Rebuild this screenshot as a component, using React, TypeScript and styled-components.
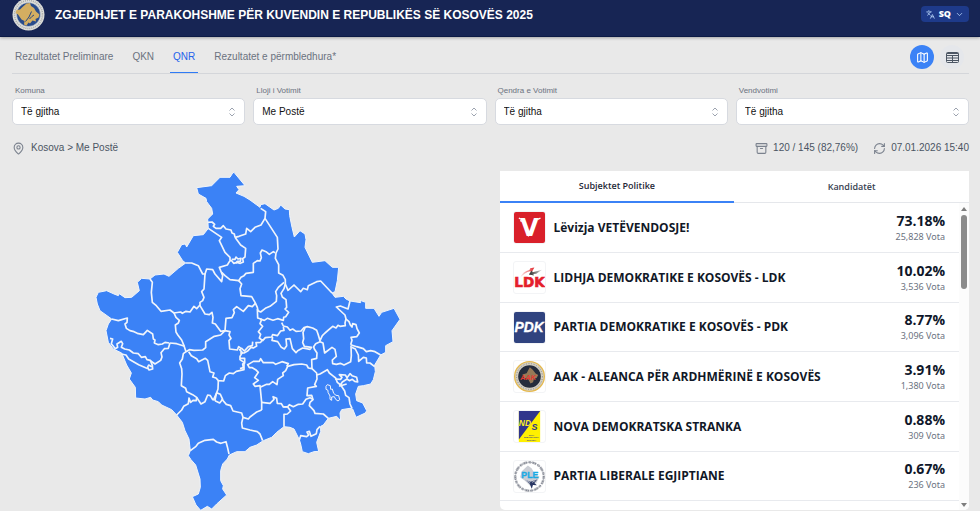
import React from "react";
import styled, { createGlobalStyle } from "styled-components";
import { Archive, ChevronDown, Languages, Map as MapIcon, MapPin, RefreshCw } from "lucide-react";

const GlobalStyle = createGlobalStyle`
  *, *::before, *::after { box-sizing: border-box; }
  html, body { margin: 0; }
  body {
    background: #e9e9e9;
    color: #4b5563;
    font-family: "Liberation Sans", Arial, sans-serif;
    font-size: 10px;
    line-height: 14px;
    overflow: hidden;
  }
  button, select { font: inherit; }
  button { cursor: pointer; }
`;

const Page = styled.div`
  display: flex;
  flex-direction: column;
  height: 100vh;
`;

const Header = styled.header`
  display: flex;
  align-items: flex-end;
  flex: none;
  gap: 10px;
  height: 37px;
  padding: 0 11px 5px 12px;
  overflow: hidden;
  background: #172554;
  border-bottom: 1px solid #0c1a45;
  box-shadow: 0 1px 3px rgba(0, 0, 0, 0.3);
`;

const Title = styled.h1`
  flex: 1;
  margin: 0;
  padding-bottom: 6px;
  color: #fff;
  font-size: 12px;
  font-weight: 700;
  line-height: 20px;
  white-space: nowrap;
`;

const LanguageButton = styled.button`
  display: flex;
  align-items: center;
  gap: 4px;
  height: 16px;
  margin-bottom: 9px;
  padding: 0 5px;
  border: 0;
  border-radius: 4px;
  background: #1e3a8a;
  color: #bfdbfe;
  font-family: "Open Sans", sans-serif;
  font-size: 9px;
  font-weight: 700;
  strong { color: #fff; }
`;

const Content = styled.main`
  display: flex;
  flex: 1;
  flex-direction: column;
  min-height: 0;
  padding: 4px 11px 0 12px;
`;

const Navigation = styled.div`
  display: flex;
  align-items: center;
  justify-content: space-between;
  height: 33px;
  border-bottom: 1px solid #d4d6da;
`;

const Tabs = styled.nav`
  display: flex;
  gap: 13px;
  height: 32px;
`;

const Tab = styled.a<{ $active?: boolean }>`
  display: flex;
  align-items: center;
  padding: 1px 3px 0;
  border-bottom: 1px solid ${(p) => (p.$active ? "#2f7bf5" : "transparent")};
  color: ${(p) => (p.$active ? "#2563eb" : "#6b7280")};
  font-size: 10px;
  text-decoration: none;
`;

const ViewButtons = styled.div`
  display: flex;
  gap: 6px;
  padding-right: 5px;
`;

const ViewButton = styled.button<{ $active?: boolean }>`
  display: grid;
  place-items: center;
  width: 24px;
  height: 24px;
  padding: 0;
  border: 0;
  border-radius: 50%;
  background: ${(p) => (p.$active ? "#3b82f6" : "#e5e7eb")};
  color: ${(p) => (p.$active ? "#fff" : "#4b5563")};
`;

const Filters = styled.div`
  display: grid;
  grid-template-columns: repeat(4, 1fr);
  gap: 8px;
  margin-top: 10px;
`;

const Field = styled.label`
  display: block;
  color: #6b7280;
  font-size: 8px;
  line-height: 14px;
`;

const FieldName = styled.span`
  display: block;
  padding-left: 3px;
`;

const SelectFrame = styled.span`
  display: grid;
  grid-template-columns: 1fr 16px;
  align-items: center;
  height: 27px;
  border: 1px solid #d7dae0;
  border-radius: 5px;
  background: #fff;
  color: #9ca3af;
`;

const Select = styled.select`
  grid-area: 1 / 1 / 2 / 3;
  width: 100%;
  height: 100%;
  padding: 0 8px;
  border: 0;
  background: transparent;
  appearance: none;
  color: #111;
  font-size: 10px;
`;

const SelectArrow = styled.svg`
  grid-area: 1 / 2;
  pointer-events: none;
`;

const StatusRow = styled.div`
  display: flex;
  align-items: center;
  gap: 15px;
  margin-top: 16px;
  height: 14px;
`;

const Status = styled.span<{ $grow?: boolean }>`
  display: flex;
  align-items: center;
  flex: ${(p) => (p.$grow ? "1" : "none")};
  gap: ${(p) => (p.$grow ? "6px" : "5px")};
  svg { color: #7b828e; }
`;

const Results = styled.div`
  display: grid;
  grid-template-columns: minmax(0, 1fr) minmax(0, 1fr);
  gap: 18px;
  flex: 1;
  min-height: 0;
  margin-top: 16px;
`;

const MapFrame = styled.div`
  display: flex;
  justify-content: center;
  min-height: 0;
  padding-left: 1px;
  svg { display: block; height: 100%; max-width: 100%; }
`;

const Panel = styled.section`
  display: flex;
  flex-direction: column;
  min-height: 0;
  margin-bottom: 1px;
  overflow: hidden;
  border-radius: 0 0 5px 5px;
  background: #fff;
  font-family: "Noto Sans", sans-serif;
`;

const PanelTabs = styled.div`
  display: grid;
  grid-template-columns: 1fr 1fr;
  flex: none;
  height: 32px;
`;

const PanelTab = styled.button<{ $active?: boolean }>`
  border: 0;
  border-bottom: ${(p) => (p.$active ? "2px solid #3b82f6" : "1px solid #e5e7eb")};
  background: #fff;
  color: ${(p) => (p.$active ? "#1f2937" : "#374151")};
  font-family: "Open Sans", sans-serif;
  font-size: 9px;
  font-weight: 600;
`;

const PanelBody = styled.div`
  display: grid;
  grid-template-columns: 1fr 10px;
  flex: 1;
  min-height: 0;
  overflow: hidden;
`;

const PartyList = styled.ul`
  min-height: 0;
  margin: 0;
  padding: 0;
  overflow: hidden;
  list-style: none;
`;

const PartyRow = styled.li`
  display: flex;
  align-items: center;
  gap: 8px;
  height: 50px;
  padding: 0 14px 0 13px;
  border-bottom: 1px solid #e8eaee;
  &:nth-child(3n) { height: 49px; }
`;

const LogoFrame = styled.span`
  display: grid;
  place-items: center;
  flex: none;
  width: 33px;
  height: 33px;
  overflow: hidden;
  border: 1px solid #f3f4f6;
  border-radius: 3px;
`;

const PartyName = styled.span`
  flex: 1;
  color: #111827;
  font-family: "Open Sans", sans-serif;
  font-size: 12px;
  font-weight: 700;
  line-height: 18px;
  white-space: nowrap;
`;

const Score = styled.span`
  display: flex;
  flex-direction: column;
  align-items: flex-end;
  color: #6b7280;
  font-size: 9px;
  line-height: 14px;
  strong {
    color: #0f172a;
    font-family: "Open Sans", sans-serif;
    font-size: 14px;
    font-weight: 700;
    line-height: 18px;
  }
`;

const Scrollbar = styled.div`
  display: flex;
  flex-direction: column;
  align-items: center;
  justify-content: space-between;
  padding: 4px 0 3px;
  background: #fcfcfc;
`;

const ScrollArrow = styled.i<{ $down?: boolean }>`
  width: 0;
  height: 0;
  border: 3px solid transparent;
  border-top: ${(p) => (p.$down ? "4px solid #7d7d7d" : "0")};
  border-bottom: ${(p) => (p.$down ? "0" : "4px solid #7d7d7d")};
`;

const ScrollThumb = styled.i`
  width: 6px;
  height: 74px;
  margin: 4px 0 auto;
  border-radius: 3px;
  background: #8b8b8b;
`;

const kosovoOutline =
  "432,20 465,60 440,62 447,72 438,82 462,92 480,103 510,125 512,117 525,114 552,133 565,128 572,118 585,130 598,132 599,150 606,185 613,214 630,195 645,205 648,222 645,245 667,290 705,285 727,305 746,305 742,345 735,378 726,382 735,395 760,392 768,400 780,406 812,411 810,404 827,410 827,428 852,428 867,452 875,440 912,428 930,461 906,495 909,528 887,540 887,560 872,568 854,598 856,618 850,642 842,655 820,660 805,662 797,685 800,705 818,712 830,735 826,742 798,755 788,730 780,728 755,732 750,742 752,765 740,752 715,758 700,778 692,782 692,798 680,830 686,857 672,858 655,864 637,858 632,835 628,822 612,790 600,785 582,783 560,800 545,815 520,825 500,838 480,845 465,858 440,858 418,868 412,880 398,895 392,915 392,945 400,960 398,970 410,988 380,1015 365,1030 352,1022 332,1034 318,1018 307,993 325,985 331,965 330,940 317,898 303,882 295,870 301,855 297,820 285,795 277,770 260,748 245,732 215,718 205,708 188,703 182,695 165,700 137,697 136,665 118,640 124,622 110,598 95,562 70,550 55,530 48,495 55,475 65,460 30,435 22,415 18,395 25,380 50,375 72,385 85,390 88,384 105,396 125,395 148,375 142,350 155,338 180,340 195,328 222,325 237,332 265,308 287,292 278,285 262,260 275,237 286,235 290,244 310,210 340,207 355,188 353,160 368,145 365,128 350,108 348,98 325,85 320,66 365,60 390,35 420,35 428,22";

const municipalityBorders = [
  "355,188 395,215 388,225 405,260 420,275 420,285",
  "353,170 366,169 374,176 370,182 378,188 392,188 400,180 408,190 423,193 426,202 433,205 435,215",
  "435,215 447,212 467,205 470,188 482,198 495,185 513,178 525,158 527,138 512,128",
  "525,158 562,215 564,250 558,262 556,278 566,297 566,322 579,329 586,342 586,355 594,374 612,358 632,378 640,368 652,372 655,360 680,348 692,346 726,382",
  "435,215 452,238 467,248 465,274 458,279 460,289 451,293 441,290 431,293 425,285 420,285",
  "425,281 435,281 438,274 444,280 453,278 451,287 442,287 438,293",
  "287,292 305,292 325,300 338,325 345,325 350,310 368,312 375,325 395,348 398,330 388,305 412,298 420,285",
  "395,320 405,330 420,342 446,345 453,335 462,330 468,323 490,320 490,293 502,285 510,286 514,276 511,262 516,253 528,258 538,266 550,258 555,261",
  "446,345 455,355 450,369 453,390 485,393 495,410 502,425 504,435 512,439 526,428 540,422 559,407 560,390 557,378 565,365 582,350",
  "345,325 342,370 335,378 342,395 338,405 330,410 330,420 345,445 358,447 366,440 369,455 367,472 376,475 392,497 405,495 408,458 426,456 433,441 430,432 440,423 460,437 475,420 487,423 497,412",
  "180,340 187,350 184,380 187,410 199,420 213,437 240,433 252,442 272,439 277,443 288,437 300,439 312,422 320,429 330,418",
  "65,460 85,465 112,457 111,470 105,475 109,488 120,495 132,498 142,503 160,507 172,494 188,505 190,520 195,523 193,532 205,537 217,535 225,530 238,532",
  "252,442 258,455 268,464 265,472 256,478 258,499 264,509 275,523 282,540 288,558",
  "240,532 260,534 284,542",
  "60,518 68,520 64,534 76,549 83,545 81,535 94,527 98,534 94,545 104,550 118,553 130,562 145,564 154,575 166,573 171,582 181,584 187,599 188,610 177,613 173,604 176,598 185,603",
  "94,565 108,568 116,580 146,597 174,609",
  "180,584 195,595 212,584 216,574 213,561 223,549 235,548 240,532",
  "288,558 280,564 277,580 269,592 275,609 276,625 274,660 287,668 290,678 308,687 320,695 319,705 309,704 302,710 297,697 295,714 281,722 275,733 260,748",
  "288,558 298,552 312,554 338,553 347,546 347,528 373,512 392,508 405,495",
  "296,558 304,570 320,579 326,588 346,578 353,584 360,618 372,622 368,634 378,637 385,645 401,646 406,630 418,622 430,624 439,617 462,612 462,590 450,582 450,572 457,561 449,552 455,548 463,556 475,543 487,540 488,528",
  "320,695 333,715 345,708 353,688 361,690 368,702 375,703 380,681 391,686 398,701 389,712 375,705",
  "385,645 384,670 379,684 370,703",
  "395,700 409,716 422,720 429,736 455,742 459,755 475,760 480,754 500,739 515,733",
  "459,755 455,772 457,787 480,793 502,798 510,805 518,825",
  "301,855 318,842 325,833 345,824 370,821 380,829 393,833 408,828 412,843 417,865",
  "515,733 515,710 510,660 495,662 490,655 505,644 494,636 505,620 497,612 487,606 478,606 472,595",
  "515,710 540,713 552,701 549,693 560,698 562,713 574,714 580,724 593,724 602,736 592,745 582,746 582,783",
  "580,724 593,723 598,717 610,723 625,716 638,715 648,701 660,696 669,702 660,710 658,720 672,735 675,743 700,745 715,758",
  "669,702 665,689 651,690 653,667 679,662 674,657 681,640 680,622 666,609 655,607 650,598 635,595 612,597 593,602 587,615 578,622 580,630 563,641 561,657 548,648 538,656 530,656 512,664",
  "628,822 632,810 650,813 656,808 651,799 658,797 663,812 679,804 681,792 690,782",
  "474,597 490,587 508,587 512,579 520,591 550,591 557,596 576,588 595,594 590,602",
  "680,628 690,625 712,612 718,622 728,630 737,637 742,650 752,658 764,676 767,689 777,696 780,715 786,728",
  "666,609 665,582 680,578 681,562 673,550 671,543 677,534 690,528 699,532 704,562 726,545 735,551 739,572 727,583 728,594 739,596 751,593 762,598 782,588 784,570 783,540",
  "735,640 752,641 756,635 748,627 766,628 771,636 780,624 786,630 800,635 803,649 794,647 787,641 778,645 771,640 757,649 749,661 770,655",
  "785,545 796,550 805,568 806,587 820,575 829,577 830,592 840,592 854,603",
  "782,537 800,543 820,549 829,558 842,555 855,558 872,568",
  "780,406 774,430 751,421 739,424 765,448 768,460 765,472 766,480 750,482 744,479 738,487 728,482 705,502 697,510 690,525 684,505 680,494 668,487 652,483 642,486 633,496 618,497 608,490 600,494 592,484 580,481 575,471",
  "768,460 777,468 781,478 786,484 788,474 798,477 801,489 808,502 800,513 783,515 786,524 782,537",
  "586,355 582,369 573,383 577,394 588,402 590,425 585,430 596,440 587,453 581,455 580,464 563,459 549,464 532,458 523,464 510,460",
  "502,430 503,457 515,461 510,474 518,482 505,498 512,506 508,517 518,525 526,516 545,514 548,507 562,510 572,496 582,494 580,484",
  "405,495 420,498 417,508 423,518 417,525 419,550 442,553 446,543 453,548",
  "548,514 546,524 563,528 574,545 583,550 590,540 588,520 600,519 607,549 618,561 623,555 638,547 660,551 665,545 643,542 638,530 641,519 639,500 645,487",
  "450,562 462,562 474,555 483,545 490,547 500,541 498,531 512,530 517,522",
  "450,578 464,578 464,592 458,595 460,606 450,609",
];

function KosovoMap() {
  return (
    <svg viewBox="0 16 945 1020" role="img" aria-label="Kosova">
      <polygon points={kosovoOutline} fill="#3b82f6" stroke="#f0f5fc" strokeWidth="3" strokeLinejoin="round" />
      <g fill="none" stroke="#f1f5fb" strokeWidth="5" strokeLinejoin="round">
        {municipalityBorders.map((points) => <polyline key={points} points={points} />)}
        <polygon strokeWidth="3" points="708,662 712,657 721,660 722,671 727,670 731,683 738,689 746,690 749,702 744,706 737,701 733,693 725,694 725,704 720,701 720,691 714,680 714,674 708,671" />
      </g>
    </svg>
  );
}

function Emblem() {
  return (
    <svg width="33" height="33" viewBox="0 0 66 66" role="img" aria-label="KQZ">
      <circle cx="33" cy="33" r="32" fill="#dddeda" />
      <circle cx="33" cy="33" r="28" fill="none" stroke="#a9aaaa" strokeWidth="3" strokeDasharray="2 2" />
      <circle cx="33" cy="33" r="24" fill="#284b8b" stroke="#f0eee5" strokeWidth="1" />
      <path d="M29 11l7-1 2 6 6 4 4 7 7 6-2 6-6 3 1 5-7-2-5 6-3-2-4 6-5-2 1-7-6-3-7-10-5-3 2-6 7-1 5-5z" fill="#d4ae61" />
      <path d="M27 47q8-8 12-20M35 42q5-6 9-8" fill="none" stroke="#274782" strokeWidth="2" />
    </svg>
  );
}

function TableIcon() {
  return (
    <svg width="13" height="11" viewBox="0 0 13 11" fill="none" stroke="currentColor" aria-hidden="true">
      <rect x="0.5" y="0.5" width="12" height="10" rx="1" />
      <path d="M1 1.5h11M1 3.5h11M1 6h11M1 8.5h11M6.5 3v7" />
    </svg>
  );
}

type LogoKind = "vv" | "ldk" | "pdk" | "aak" | "nds" | "ple";

function PartyLogo({ kind }: { kind: LogoKind }) {
  const sans = "Liberation Sans, sans-serif";
  return (
    <svg width="31" height="31" viewBox="0 0 96 96" overflow="visible" aria-hidden="true">
      {kind === "vv" && (
        <>
          <rect x="-4" y="-4" width="104" height="104" fill="#d9202a" />
          <text x="48" y="75" textAnchor="middle" fontFamily="DejaVu Sans, sans-serif" fontWeight="700" fontSize="74" fill="#fff">V</text>
          <path d="M15 19l11 5M19 27l10 3M73 23l9-4M40 70l6 5" stroke="#fff" strokeWidth="4" />
        </>
      )}
      {kind === "ldk" && (
        <>
          <defs>
            <linearGradient id="ldkRed"><stop stopColor="#fff" /><stop offset="1" stopColor="#e3282d" /></linearGradient>
            <linearGradient id="ldkDark"><stop stopColor="#222" /><stop offset="1" stopColor="#ddd" /></linearGradient>
          </defs>
          <path d="M17 51Q28 28 48 25l2-6 13-2-8 15-6-3Q35 32 17 51z" fill="url(#ldkRed)" />
          <path d="M46 39l9-13 3 6 29-8-18 12-9 1 2 5z" fill="url(#ldkDark)" />
          <text x="48" y="78" textAnchor="middle" fontFamily="DejaVu Sans, sans-serif" fontWeight="700" fontSize="42" fill="#e51e2b" stroke="#e51e2b" strokeWidth="2">LDK</text>
        </>
      )}
      {kind === "pdk" && (
        <>
          <rect x="-4" y="-4" width="104" height="104" fill="#30437f" />
          <text x="47" y="63" textAnchor="middle" fontFamily={sans} fontStyle="italic" fontWeight="700" fontSize="43" fill="#fff" stroke="#fff" strokeWidth="1">PDK</text>
        </>
      )}
      {kind === "aak" && (
        <>
          <circle cx="48" cy="48" r="46" fill="#d3cfc3" stroke="#e5b94f" strokeWidth="4" />
          <circle cx="48" cy="48" r="40" fill="none" stroke="#8d8b83" strokeWidth="3" strokeDasharray="3 5" />
          <circle cx="48" cy="48" r="35" fill="#252d3c" />
          <path d="M49 19l9 8 9 12 8 4-5 10-8 2-3 11-8 4-6-12-15-7-4-9 13-4z" fill="#967a57" />
          <text x="44" y="58" textAnchor="middle" fontFamily={sans} fontStyle="italic" fontWeight="700" fontSize="23" fill="#e33b32">AAK</text>
        </>
      )}
      {kind === "nds" && (
        <>
          <path d="M15 0h66v96H15z" fill="#fff000" />
          <path d="M15 0h66L15 88z" fill="#30358b" />
          <text x="15" y="45" fontFamily={sans} fontStyle="italic" fontWeight="700" fontSize="26" fill="#ffed23">ND</text>
          <text x="54" y="60" fontFamily={sans} fontStyle="italic" fontWeight="700" fontSize="28" fill="#30358b">S</text>
          <g fontFamily={sans} fontWeight="700" fontSize="6" fill="#30358b" textAnchor="middle">
            <text x="54" y="77">NOVA</text>
            <text x="54" y="85">DEMOKRATSKA</text>
            <text x="54" y="93">STRANKA</text>
          </g>
        </>
      )}
      {kind === "ple" && (
        <>
          <circle cx="48" cy="48" r="44" fill="#fff" stroke="#b4b6bc" strokeWidth="8" strokeDasharray="8 3 14 4" />
          <circle cx="48" cy="48" r="44" fill="none" stroke="#697080" strokeWidth="3" strokeDasharray="3 4" />
          <path d="M43 14l12 9 8 15 16 11-10 20-20 7-15-15-15-11 5-18z" fill="#cbced5" />
          <path d="M35 58l16 6 21-7-9 11 8 7-12-1-4 12-7-16z" fill="#293764" />
          <path d="M38 60l12 7M56 66l10-5M58 77l7 8" stroke="#fff" strokeWidth="2" />
          <text x="49" y="52" textAnchor="middle" fontFamily={sans} fontWeight="700" fontSize="27" fill="#1aaae4" stroke="#1aaae4" strokeWidth="1">PLE</text>
        </>
      )}
    </svg>
  );
}

const parties: { name: string; percent: string; votes: string; logo: LogoKind }[] = [
  { name: "Lëvizja VETËVENDOSJE!", percent: "73.18%", votes: "25,828", logo: "vv" },
  { name: "LIDHJA DEMOKRATIKE E KOSOVËS - LDK", percent: "10.02%", votes: "3,536", logo: "ldk" },
  { name: "PARTIA DEMOKRATIKE E KOSOVËS - PDK", percent: "8.77%", votes: "3,096", logo: "pdk" },
  { name: "AAK - ALEANCA PËR ARDHMËRINË E KOSOVËS", percent: "3.91%", votes: "1,380", logo: "aak" },
  { name: "NOVA DEMOKRATSKA STRANKA", percent: "0.88%", votes: "309", logo: "nds" },
  { name: "PARTIA LIBERALE EGJIPTIANE", percent: "0.67%", votes: "236", logo: "ple" },
];

const filters = [
  { label: "Komuna", value: "Të gjitha" },
  { label: "Lloji i Votimit", value: "Me Postë" },
  { label: "Qendra e Votimit", value: "Të gjitha" },
  { label: "Vendvotimi", value: "Të gjitha" },
];

export default function App() {
  return (
    <>
      <GlobalStyle />
      <Page>
        <Header>
          <Emblem />
          <Title>ZGJEDHJET E PARAKOHSHME PËR KUVENDIN E REPUBLIKËS SË KOSOVËS 2025</Title>
          <LanguageButton>
            <Languages size={9} />
            <strong>SQ</strong>
            <ChevronDown size={9} />
          </LanguageButton>
        </Header>
        <Content>
          <Navigation>
            <Tabs>
              <Tab href="#preliminare">Rezultatet Preliminare</Tab>
              <Tab href="#qkn">QKN</Tab>
              <Tab href="#qnr" $active aria-current="page">QNR</Tab>
              <Tab href="#permbledhura">Rezultatet e përmbledhura*</Tab>
            </Tabs>
            <ViewButtons>
              <ViewButton $active aria-label="Harta"><MapIcon size={13} strokeWidth={2} /></ViewButton>
              <ViewButton aria-label="Tabela"><TableIcon /></ViewButton>
            </ViewButtons>
          </Navigation>
          <Filters>
            {filters.map((filter) => (
              <Field key={filter.label}>
                <FieldName>{filter.label}</FieldName>
                <SelectFrame>
                  <Select defaultValue={filter.value}><option>{filter.value}</option></Select>
                  <SelectArrow width="8" height="10" viewBox="0 0 8 10" fill="none" stroke="currentColor">
                    <path d="M1.5 3.5L4 1l2.5 2.5M1.5 6.5L4 9l2.5-2.5" />
                  </SelectArrow>
                </SelectFrame>
              </Field>
            ))}
          </Filters>
          <StatusRow>
            <Status $grow><MapPin size={13} strokeWidth={2} />Kosova &gt; Me Postë</Status>
            <Status><Archive size={13} strokeWidth={2} />120 / 145 (82,76%)</Status>
            <Status><RefreshCw size={13} strokeWidth={2} />07.01.2026 15:40</Status>
          </StatusRow>
          <Results>
            <MapFrame><KosovoMap /></MapFrame>
            <Panel>
              <PanelTabs role="tablist">
                <PanelTab role="tab" aria-selected="true" $active>Subjektet Politike</PanelTab>
                <PanelTab role="tab" aria-selected="false">Kandidatët</PanelTab>
              </PanelTabs>
              <PanelBody>
                <PartyList>
                  {parties.map((party) => (
                    <PartyRow key={party.name}>
                      <LogoFrame><PartyLogo kind={party.logo} /></LogoFrame>
                      <PartyName>{party.name}</PartyName>
                      <Score><strong>{party.percent}</strong>{party.votes} Vota</Score>
                    </PartyRow>
                  ))}
                </PartyList>
                <Scrollbar aria-hidden="true">
                  <ScrollArrow />
                  <ScrollThumb />
                  <ScrollArrow $down />
                </Scrollbar>
              </PanelBody>
            </Panel>
          </Results>
        </Content>
      </Page>
    </>
  );
}
